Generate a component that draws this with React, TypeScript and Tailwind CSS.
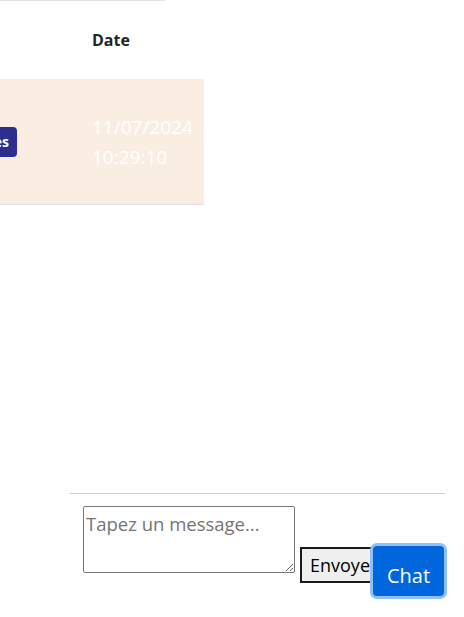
export default function App() {
  const font = { fontFamily: '"Open Sans", "Segoe UI", sans-serif' };
  return (
    <div className="relative h-[617px] w-[464px] overflow-hidden bg-white text-[#212529]" style={font}>
      {/* table, scrolled horizontally so its first column is mostly hidden */}
      <div className="w-[204px] overflow-hidden">
        <div className="h-px w-[165px] bg-[#dee2e6]" />
        <div className="flex h-[78px] items-center">
          <div className="w-[92px]" />
          <div className="text-[16px] font-bold">Date</div>
        </div>
        <div className="flex h-[126px] items-center border-b border-[#dee2e6] bg-[#faeee3]">
          <div className="flex w-[92px] justify-end pr-[75px]">
            <span className="shrink-0 rounded-[4px] bg-[#2d2e8f] px-2 py-[5px] text-[14px] font-bold leading-[20px] text-white">
              Messages
            </span>
          </div>
          <div className="text-[19px] leading-[30px] text-white">
            <div>11/07/2024</div>
            <div>10:29:10</div>
          </div>
        </div>
      </div>

      {/* message composer */}
      <div className="ml-[70px] mt-[288px] w-[375px] border-t border-[#cccccc] pt-3">
        <div className="flex items-start pl-[13px]">
          <textarea
            placeholder="Tapez un message..."
            className="h-[67px] w-[212px] rounded-[2px] border border-[#767676] px-[2px] pt-[5px] text-[18.5px] leading-[24px] placeholder:text-[#757575]"
            style={font}
          />
          <button className="ml-[5px] mt-[41px] h-[36px] whitespace-nowrap border-2 border-[#1a1a1a] bg-[#efefef] px-2 text-[18px] text-black">
            Envoyer
          </button>
        </div>
      </div>

      {/* floating chat button */}
      <button className="absolute bottom-[18px] right-[17px] flex h-[56px] w-[77px] items-center justify-center rounded-[7px] border-[3px] border-[#8fc0f8] bg-[#0066dd] pt-[10px] text-[20px] text-white">
        Chat
      </button>
    </div>
  );
}
